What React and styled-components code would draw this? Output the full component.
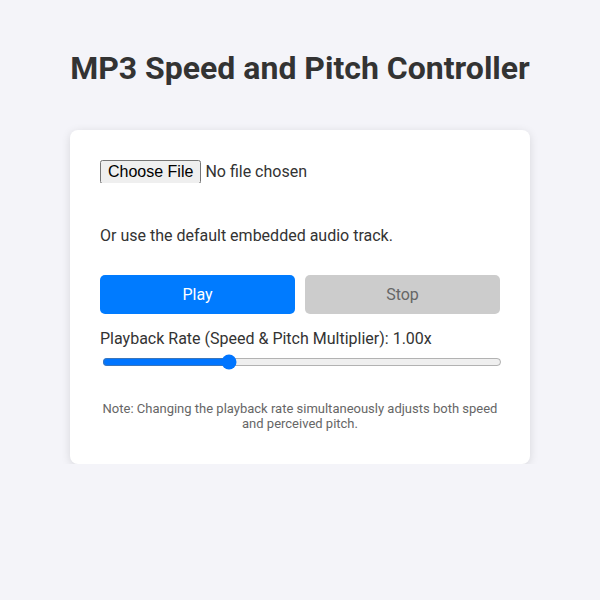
import React, { useState } from "react";
import styled, { createGlobalStyle } from "styled-components";

const GlobalStyle = createGlobalStyle`
	* { box-sizing: border-box; }
	body {
		margin: 0;
		background: #f4f4f9;
		font-family: Roboto, "Liberation Sans", Arial, sans-serif;
		color: #333;
	}
`;

const Page = styled.div`
	display: flex;
	flex-direction: column;
	align-items: center;
	padding-top: 48px;
`;

const Title = styled.h1`
	margin: 0 0 42px;
	font-size: 32px;
	font-weight: 700;
	color: #333;
	line-height: 40px;
`;

const Card = styled.div`
	width: 460px;
	padding: 30px 30px 33px;
	background: #fff;
	border-radius: 8px;
	box-shadow: 0 2px 10px rgba(0, 0, 0, 0.12);
	display: flex;
	flex-direction: column;
`;

const FileInput = styled.input`
	font-family: Roboto, "Liberation Sans", Arial, sans-serif;
	font-size: 16px;
	color: #333;
	margin: 0;
	height: 23px;
`;

const Hint = styled.p`
	margin: 43px 0 30px;
	font-size: 16px;
	line-height: 19px;
`;

const Buttons = styled.div`
	display: flex;
	gap: 10px;
`;

const Button = styled.button`
	flex: 1;
	height: 39px;
	border: none;
	border-radius: 5px;
	font-family: inherit;
	font-size: 16px;
	background: ${(p) => (p.$disabled ? "#cccccc" : "#007bff")};
	color: ${(p) => (p.$disabled ? "#666" : "#fff")};
	cursor: ${(p) => (p.$disabled ? "not-allowed" : "pointer")};
`;

const Label = styled.label`
	margin-top: 15px;
	font-size: 16px;
	line-height: 19px;
`;

const Range = styled.input`
	width: 100%;
	margin: 6px 0 0 2px;
	padding: 0;
	accent-color: #0075ff;
`;

const Note = styled.p`
	margin: 31px 0 0;
	font-size: 13px;
	line-height: 15px;
	color: #666;
	text-align: center;
`;

export default function App() {
	const [rate, setRate] = useState(1);
	return (
		<Page>
			<GlobalStyle />
			<Title>MP3 Speed and Pitch Controller</Title>
			<Card>
				<FileInput type="file" accept="audio/mpeg" />
				<Hint>Or use the default embedded audio track.</Hint>
				<Buttons>
					<Button>Play</Button>
					<Button $disabled>Stop</Button>
				</Buttons>
				<Label htmlFor="rate">
					Playback Rate (Speed &amp; Pitch Multiplier): {rate.toFixed(2)}x
				</Label>
				<Range
					id="rate"
					type="range"
					min="0.1"
					max="3"
					step="0.01"
					value={rate}
					onChange={(e) => setRate(parseFloat(e.target.value))}
				/>
				<Note>
					Note: Changing the playback rate simultaneously adjusts both speed
					and perceived pitch.
				</Note>
			</Card>
		</Page>
	);
}
